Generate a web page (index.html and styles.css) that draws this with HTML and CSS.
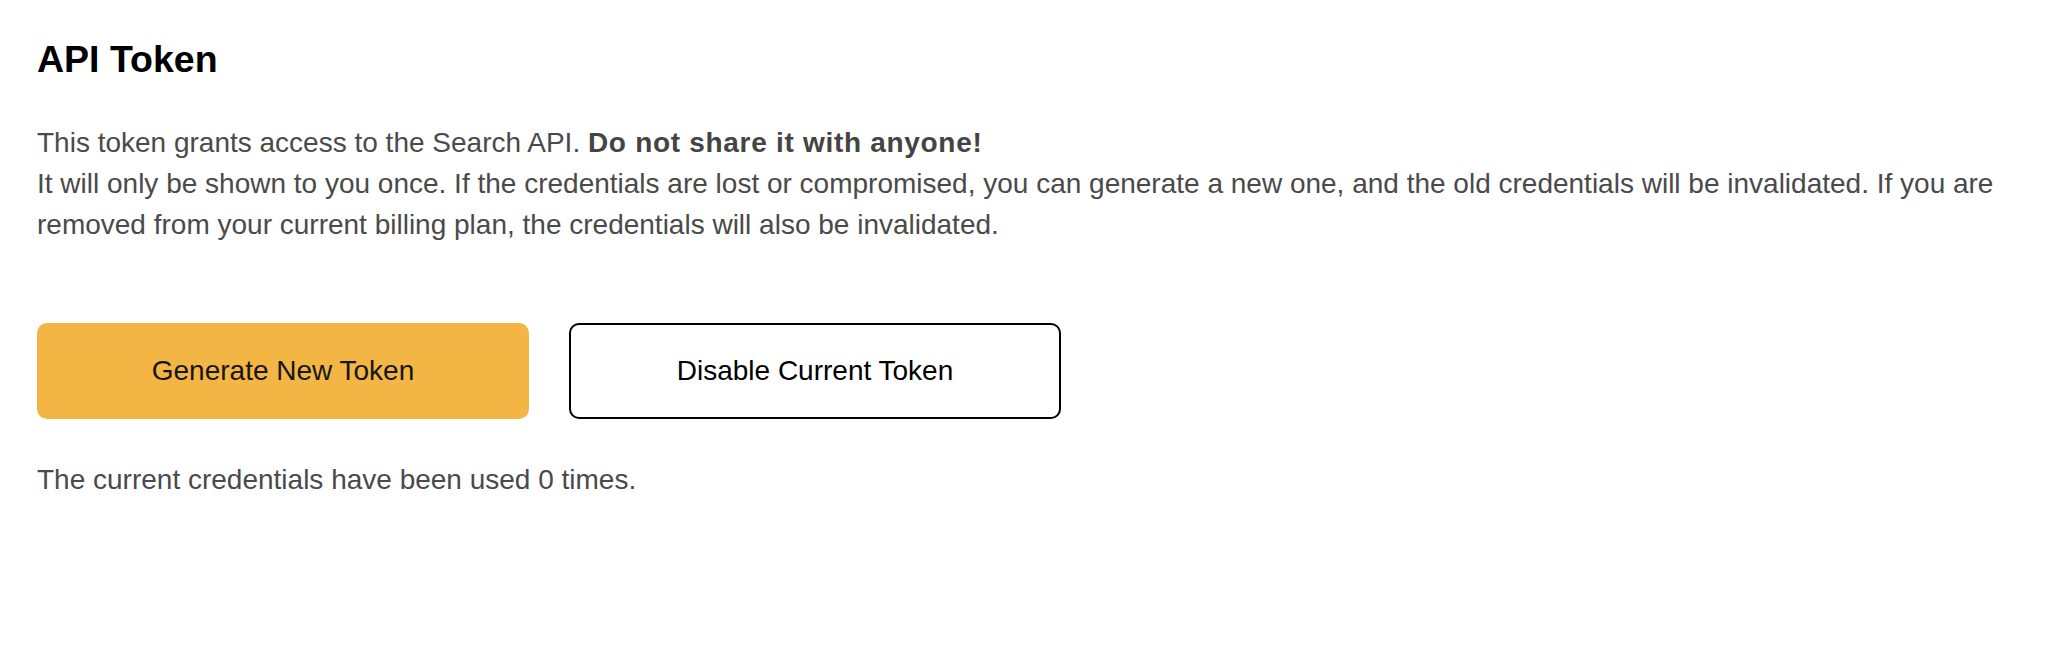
FILE: index.html
```html
<!DOCTYPE html>
<html lang="en">
<head>
<meta charset="utf-8">
<title>API Token</title>
<link rel="stylesheet" href="styles.css">
</head>
<body>
<main class="page">
  <h1 class="title">API Token</h1>
  <p class="intro">This token grants access to the Search API. <strong>Do not share it with anyone!</strong><br>It will only be shown to you once. If the credentials are lost or compromised, you can generate a new one, and the old credentials will be invalidated. If you are removed from your current billing plan, the credentials will also be invalidated.</p>
  <div class="actions">
    <button class="btn btn-primary" type="button">Generate New Token</button>
    <button class="btn btn-outline" type="button">Disable Current Token</button>
  </div>
  <p class="usage">The current credentials have been used 0 times.</p>
</main>
</body>
</html>
```
FILE: styles.css
```css
html, body {
  margin: 0;
  padding: 0;
  background: #ffffff;
}

body {
  font-family: "Liberation Sans", Arial, Helvetica, sans-serif;
  color: #4a4a4a;
}

.page {
  padding: 38px 37px 0 37px;
}

.title {
  margin: 0;
  font-size: 37.5px;
  line-height: 43px;
  font-weight: 700;
  color: #000000;
}

.intro {
  margin: 41px 0 0 0;
  font-size: 28px;
  line-height: 41px;
}

.intro strong {
  font-weight: 700;
  color: #444444;
  letter-spacing: 0.7px;
}

.actions {
  display: flex;
  gap: 40px;
  margin-top: 78px;
}

.btn {
  width: 492px;
  height: 96px;
  box-sizing: border-box;
  border-radius: 10px;
  font-family: "Liberation Sans", Arial, Helvetica, sans-serif;
  font-size: 28px;
  color: #161616;
  display: flex;
  align-items: center;
  justify-content: center;
  padding: 0;
  cursor: pointer;
}

.btn-primary {
  background: #f3b544;
  border: none;
}

.btn-outline {
  background: #ffffff;
  border: 2px solid #000000;
  color: #000000;
}

.usage {
  margin: 40px 0 0 0;
  font-size: 28px;
  line-height: 41px;
}
```
